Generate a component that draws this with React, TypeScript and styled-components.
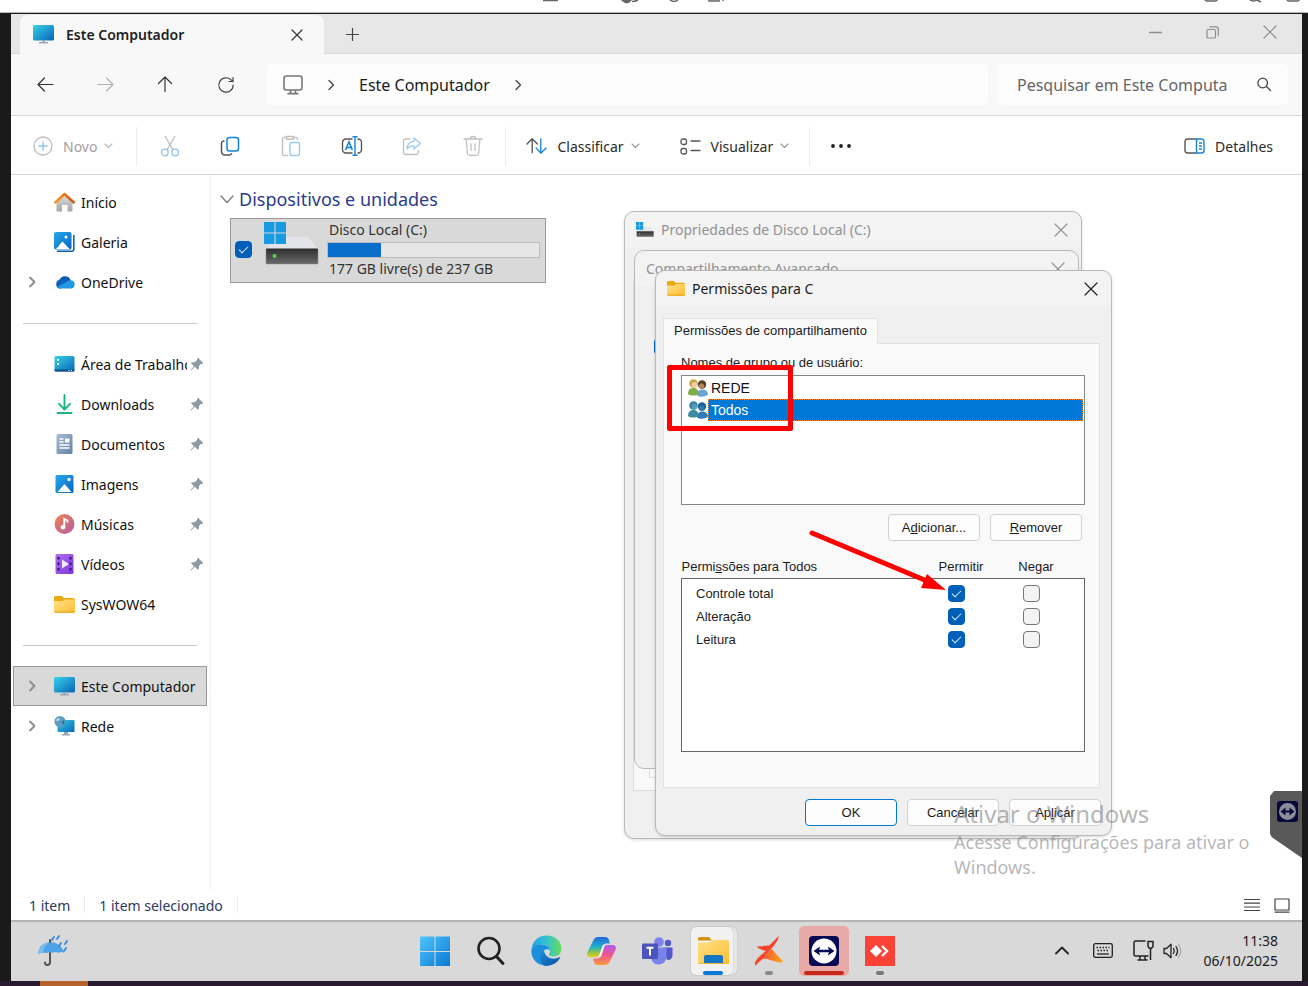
import React from 'react';
import styled, { createGlobalStyle, css } from 'styled-components';

const ui = "'Noto Sans', 'Open Sans', sans-serif";
const classic = "'Liberation Sans', Arial, sans-serif";

const GlobalStyle = createGlobalStyle`
  *, *::before, *::after { box-sizing: border-box; }
  body { margin: 0; background: #1a1a1a; font-family: ${ui}; color: #1b1b1b; }
  button, input { font: inherit; color: inherit; }
`;

/* ---------- page frame ---------- */

const Page = styled.div`
  min-height: 100vh;
  display: flex;
  flex-direction: column;
  background: #1a1a1a;
`;

const HostBar = styled.div`
  height: 13px;
  flex: none;
  display: flex;
  justify-content: space-between;
  padding: 0 8px 0 542px;
  background: #fff;
  border-bottom: 1px solid #b9b9b9;
`;

const HostBottom = styled.div`
  height: 5px;
  flex: none;
  padding-left: 40px;
  background: #2a1a30;
`;

const HostBottomTab = styled.div`
  width: 48px;
  height: 5px;
  background: #b5622e;
`;

const Desktop = styled.div`
  position: relative;
  flex: 1;
  display: flex;
  flex-direction: column;
  margin: 1px 6px 0 11px;
  background: #fff;
`;

const Explorer = styled.main`
  flex: 1;
  display: flex;
  flex-direction: column;
  min-height: 0;
`;

/* ---------- title bar ---------- */

const TitleBar = styled.div`
  height: 40px;
  display: flex;
  align-items: flex-end;
  padding-left: 9px;
  background: #e7e7e7;
  border-bottom: 1px solid #d9d9d9;
`;

const WindowTab = styled.div`
  height: 39px;
  width: 304px;
  display: flex;
  align-items: center;
  gap: 12px;
  padding: 0 17px 0 13px;
  margin-bottom: -1px;
  background: #f8f8f8;
  border-radius: 8px 8px 0 0;
  font-size: 14px;
  font-weight: 600;
  color: #222;
`;

const PlainButton = styled.button<{ $w?: number; $h?: number }>`
  width: ${(p) => p.$w ?? 40}px;
  height: ${(p) => p.$h ?? 40}px;
  flex: none;
  display: flex;
  align-items: center;
  justify-content: center;
  padding: 0;
  border: 0;
  background: none;
`;

const Grow = styled.span`
  flex: 1;
`;

const Caption = styled.div`
  display: flex;
  align-self: flex-start;
  margin-left: auto;
  padding-right: 3px;
  color: #8d8d8d;
`;

/* ---------- navigation ---------- */

const NavBar = styled.div`
  height: 62px;
  display: flex;
  align-items: center;
  padding: 0 14px;
  gap: 10px;
  background: #f8f8f8;
  border-bottom: 1px solid #d6d6d6;
`;

const NavButtons = styled.nav`
  display: flex;
  gap: 20px;
  margin-right: 10px;
`;

const AddressBar = styled.div`
  flex: 1;
  height: 41px;
  display: flex;
  align-items: center;
  padding-left: 16px;
  gap: 24px;
  background: #fdfdfd;
  border-radius: 5px;
  font-size: 16px;
`;

const SearchBox = styled.label`
  width: 290px;
  height: 41px;
  display: flex;
  align-items: center;
  padding: 0 16px 0 19px;
  background: #fdfdfd;
  border-radius: 5px;
`;

const SearchInput = styled.input`
  flex: 1;
  min-width: 0;
  padding: 0;
  border: 0;
  outline: 0;
  background: none;
  font-size: 16px;
  &::placeholder { color: #666; opacity: 1; }
`;

/* ---------- command bar ---------- */

const CommandBar = styled.div`
  height: 59px;
  display: flex;
  align-items: center;
  padding: 2px 9px 0 2px;
  border-bottom: 1px solid #d6d6d6;
  background: #fff;
`;

const Divider = styled.span`
  width: 1px;
  height: 39px;
  background: #ececec;
`;

const Command = styled.button<{ $muted?: boolean }>`
  height: 40px;
  display: flex;
  align-items: center;
  gap: 10px;
  padding: 0 20px;
  border: 0;
  background: none;
  font-size: 14px;
  color: ${(p) => (p.$muted ? '#a0a0a0' : '#2a2a2a')};
  & > svg:last-child:not(:first-child) { margin-left: -3px; }
`;

const IconCommands = styled.div`
  width: 364px;
  display: flex;
  margin: 0 2px;
`;

const IconCommand = styled.button`
  flex: 1;
  height: 40px;
  display: flex;
  align-items: center;
  justify-content: center;
  padding: 0;
  border: 0;
  background: none;
`;

/* ---------- sidebar ---------- */

const Body = styled.div`
  flex: 1;
  display: flex;
`;

const Sidebar = styled.nav`
  width: 200px;
  flex: none;
  padding: 7px 3px 0 2px;
  border-right: 1px solid #f0f0f0;
`;

const SideItem = styled.a<{ $selected?: boolean }>`
  height: 40px;
  display: flex;
  align-items: center;
  padding: 0 2px 0 14px;
  border: 1px solid ${(p) => (p.$selected ? '#999' : 'transparent')};
  background: ${(p) => (p.$selected ? '#d9d9d9' : 'none')};
  color: #111;
  font-size: 14px;
  text-decoration: none;
`;

const SideChevron = styled.span`
  width: 26px;
  display: flex;
`;

const SideLabel = styled.span`
  flex: 1;
  margin: 0 3px 0 6px;
  overflow: hidden;
  white-space: nowrap;
`;

const SideRule = styled.hr`
  height: 1px;
  margin: 21px 10px 20px;
  border: 0;
  background: #c9c9c9;
`;

/* ---------- content ---------- */

const Content = styled.section`
  flex: 1;
  padding: 10px 9px;
`;

const GroupHeading = styled.h2`
  display: flex;
  align-items: center;
  gap: 5px;
  height: 28px;
  margin: 0;
  font-size: 18px;
  font-weight: 400;
  color: #2a3b8e;
`;

const Drive = styled.div`
  width: 316px;
  height: 65px;
  display: flex;
  align-items: center;
  margin: 5px 0 0 10px;
  padding: 0 5px 2px 4px;
  border: 1px solid #999;
  background: #d9d9d9;
`;

const DrivePicture = styled.div`
  display: flex;
  margin: 0 8px 12px 12px;
`;

const DriveInfo = styled.div`
  flex: 1;
  font-size: 14px;
  line-height: 20px;
  color: #333;
`;

const DriveName = styled.div`
  padding-left: 2px;
`;

const UsageBar = styled.div`
  height: 16px;
  margin: 2px 0 1px;
  border: 1px solid #bcbcbc;
  background: #e6e6e6;
`;

const UsageFill = styled.div`
  height: 100%;
  background: #0a6fcc;
`;

const StatusBar = styled.footer`
  height: 30px;
  display: flex;
  align-items: center;
  padding: 0 12px 0 18px;
  gap: 14px;
  font-size: 14px;
  color: #2c3a5e;
`;

const StatusRule = styled.span`
  width: 1px;
  height: 16px;
  background: #ebebeb;
`;

/* ---------- check box ---------- */

const Check = styled.input.attrs({ type: 'checkbox' })`
  appearance: none;
  position: relative;
  width: 17px;
  height: 17px;
  flex: none;
  margin: 0;
  display: block;
  border: 1px solid #777;
  border-radius: 4px;
  background: #f3f3f3;
  &:checked { border-color: #005fb8; background: #005fb8; }
  &:checked::after {
    content: '';
    position: absolute;
    left: 3px;
    top: 4px;
    width: 9px;
    height: 5px;
    border: solid #dbe9f6;
    border-width: 0 0 1px 1px;
    transform: rotate(-45deg);
  }
`;

/* ---------- dialogs ---------- */

const Dialog = styled.section<{ $x: number; $y: number; $w: number; $h: number; $front?: boolean }>`
  position: absolute;
  left: ${(p) => p.$x}px;
  top: ${(p) => p.$y}px;
  width: ${(p) => p.$w}px;
  height: ${(p) => p.$h}px;
  display: flex;
  flex-direction: column;
  border: 1px solid #b9b9b9;
  border-radius: 10px;
  background: #f0f0f0;
  font-family: ${classic};
  font-size: 13px;
  ${(p) => p.$front && css`box-shadow: 0 1px 3px rgba(0, 0, 0, 0.15);`}
`;

const DialogTitle = styled.header<{ $muted?: boolean }>`
  height: 35px;
  flex: none;
  display: flex;
  align-items: center;
  gap: 7px;
  padding-left: 11px;
  border-radius: 10px 10px 0 0;
  background: #f3f3f3;
  font-family: ${ui};
  font-size: 14px;
  color: ${(p) => (p.$muted ? '#929292' : '#1b1b1b')};
`;

const BackPanel = styled.div`
  flex: 1;
  display: flex;
  margin: 32px 8px 47px;
  padding: 15px 15px 12px;
  border: 1px solid #dcdcdc;
  background: #f9f9f9;
`;

const GroupBox = styled.div`
  flex: 1;
  border: 1px solid #dcdcdc;
`;

const BackContent = styled.div`
  padding: 52px 19px;
`;

const TabList = styled.div`
  display: flex;
  margin: 12px 8px 0 7px;
`;

const DialogTab = styled.button`
  height: 26px;
  width: 215px;
  margin-bottom: -1px;
  padding: 0 0 2px;
  border: 1px solid #e2e2e2;
  border-bottom: 0;
  background: #f9f9f9;
  z-index: 1;
`;

const TabPanel = styled.div`
  flex: 1;
  display: flex;
  flex-direction: column;
  margin: 0 11px 0 7px;
  padding: 9px 14px 0 17px;
  border: 1px solid #e2e2e2;
  background: #f9f9f9;
`;

const FieldLabel = styled.div`
  height: 22px;
  line-height: 20px;
`;

const UserList = styled.ul`
  position: relative;
  height: 130px;
  margin: 0;
  padding: 1px;
  border: 1px solid #828790;
  background: #fff;
  list-style: none;
`;

const UserRow = styled.li`
  height: 22px;
  display: flex;
  align-items: center;
  padding-left: 5px;
  font-size: 14px;
`;

const UserName = styled.span<{ $selected?: boolean }>`
  flex: 1;
  height: 22px;
  line-height: 20px;
  padding-left: 2px;
  border: 1px dotted ${(p) => (p.$selected ? '#ff8728' : 'transparent')};
  background: ${(p) => (p.$selected ? '#0078d7' : 'none')};
  color: ${(p) => (p.$selected ? '#fff' : '#111')};
`;

const ButtonRow = styled.div<{ $pad: number }>`
  display: flex;
  justify-content: flex-end;
  gap: 10px;
  padding-right: ${(p) => p.$pad}px;
`;

const DialogButton = styled.button<{ $primary?: boolean }>`
  width: 92px;
  height: 27px;
  padding: 0;
  border: 1px solid ${(p) => (p.$primary ? '#0078d4' : '#d0d0d0')};
  border-radius: 4px;
  background: #fdfdfd;
`;

const ListActions = styled.div`
  padding: 9px 0 14px;
`;

const PermissionTable = styled.table`
  width: 404px;
  border-collapse: collapse;
  table-layout: fixed;
  th { font-weight: 400; height: 23px; padding: 0; }
  thead th:first-child { text-align: left; width: 237px; }
  thead th:nth-child(2), thead th:nth-child(3) { width: 75px; padding-left: 10px; }
  tbody { border: 1px solid #646464; background: #fff; }
  tbody th { text-align: left; padding-left: 14px; }
  tbody th, tbody td { height: 23px; }
  td { padding: 0; }
  td > input { margin: 0 auto; }
`;

const Spacer = styled.tr<{ $h: number }>`
  & > td { height: ${(p) => p.$h}px !important; }
`;

const DialogFooter = styled.div`
  padding: 11px 0 9px;
`;

/* ---------- overlays ---------- */

const Highlight = styled.div`
  position: absolute;
  left: -15px;
  top: -11px;
  width: 126px;
  height: 66px;
  border: 5px solid #fe0000;
  border-radius: 2px;
`;

const Arrow = styled.svg`
  position: absolute;
  left: 153px;
  top: 258px;
`;

const Watermark = styled.aside`
  position: absolute;
  right: 40px;
  bottom: 101px;
  width: 308px;
  color: rgba(120, 120, 120, 0.55);
  font-size: 18px;
  line-height: 25px;
  pointer-events: none;
`;

const WatermarkTitle = styled.div`
  font-size: 24px;
  line-height: 32px;
`;

const SideHandle = styled.button`
  position: absolute;
  right: 0;
  bottom: 123px;
  padding: 0;
  border: 0;
  background: none;
  display: block;
  & > svg { display: block; }
`;

/* ---------- task bar ---------- */

const TaskBar = styled.div`
  height: 61px;
  flex: none;
  display: grid;
  grid-template-columns: 1fr 495px 1fr;
  align-items: center;
  padding: 0 0 2px 2px;
  border-top: 2px solid #b4b4b4;
  background: #d9d9d9;
`;

const Weather = styled.div`
  display: flex;
  padding-left: 24px;
`;

const Apps = styled.div`
  display: flex;
  justify-content: space-between;
`;

const AppButton = styled.button<{ $tone?: string }>`
  position: relative;
  width: 50px;
  height: 50px;
  display: flex;
  align-items: center;
  justify-content: center;
  padding: 0;
  border: 0;
  border-radius: 5px;
  background: ${(p) => p.$tone ?? 'none'};
`;

const Stack = styled.span`
  position: absolute;
  inset: 1px 1px 1px 3px;
  border-radius: 5px;
  background: #e6e6e6;
  box-shadow: 0 0 1px #999;
  &::after {
    content: '';
    position: absolute;
    inset: 0 4px 0 0;
    border-radius: 5px;
    background: #f1f1f1;
    box-shadow: 0 0 1px #999;
  }
`;

const Above = styled.span`
  position: relative;
  display: flex;
`;

const Indicator = styled.span<{ $w: number; $c: string }>`
  position: absolute;
  left: calc(50% - ${(p) => p.$w / 2}px);
  bottom: 1px;
  width: ${(p) => p.$w}px;
  height: 4px;
  border-radius: 2px;
  background: ${(p) => p.$c};
`;

const Tray = styled.div`
  display: flex;
  align-items: center;
  justify-content: flex-end;
  padding-right: 24px;
`;

const TrayIcons = styled.div`
  display: flex;
  align-items: center;
  margin-right: 22px;
`;

const Gap = styled.span<{ $w: number }>`
  width: ${(p) => p.$w}px;
`;

const Clock = styled.time`
  font-size: 14px;
  line-height: 20px;
  text-align: right;
`;

/* ---------- icons ---------- */

type LineProps = { d: string; w?: number; h?: number; sw?: number; c?: string };
const Line = ({ d, w = 20, h = 20, sw = 1.3, c = 'currentColor' }: LineProps) => (
  <svg width={w} height={h} viewBox={`0 0 ${w} ${h}`} fill="none" stroke={c} strokeWidth={sw} strokeLinecap="round" strokeLinejoin="round" aria-hidden="true">
    <path d={d} />
  </svg>
);

const Close = ({ size = 14, c = 'currentColor' }: { size?: number; c?: string }) => (
  <Line w={size} h={size} d={`M1 1L${size - 1} ${size - 1}M${size - 1} 1L1 ${size - 1}`} c={c} sw={1.2} />
);
const ChevronDown = ({ c = '#999' }: { c?: string }) => <Line w={9} h={6} d="M1 1l3.5 3.5L8 1" c={c} sw={1.1} />;
const ChevronRight = ({ c = '#444', sw = 1.3 }: { c?: string; sw?: number }) => <Line w={8} h={12} d="M2 1.500l4.500 4.500L2 10.500" c={c} sw={sw} />;

const Gradients = () => (
  <svg width="0" height="0" style={{ position: 'absolute' }} aria-hidden="true">
    <defs>
      <linearGradient id="screen" x1="0" y1="0" x2="1" y2="1"><stop offset="0" stopColor="#35d3e6" /><stop offset="1" stopColor="#0a63b8" /></linearGradient>
      <linearGradient id="sky" x1="0" y1="0" x2="1" y2="1"><stop offset="0" stopColor="#2aa9ec" /><stop offset="1" stopColor="#0664bf" /></linearGradient>
      <linearGradient id="tiles" x1="0" y1="0" x2="1" y2="1"><stop offset="0" stopColor="#4fc6fa" /><stop offset="1" stopColor="#0a78d4" /></linearGradient>
      <linearGradient id="roof" x1="0" y1="0" x2="1" y2="0"><stop offset="0" stopColor="#f59a1c" /><stop offset="1" stopColor="#dc4a12" /></linearGradient>
      <linearGradient id="wall" x1="0" y1="0" x2="0" y2="1"><stop offset="0" stopColor="#dcdcdc" /><stop offset="1" stopColor="#a6a6a6" /></linearGradient>
      <linearGradient id="doc" x1="0" y1="0" x2="1" y2="1"><stop offset="0" stopColor="#a9bcd3" /><stop offset="1" stopColor="#6480a5" /></linearGradient>
      <linearGradient id="music" x1="0" y1="0" x2="1" y2="1"><stop offset="0" stopColor="#f2854c" /><stop offset="1" stopColor="#b25ca8" /></linearGradient>
      <linearGradient id="video" x1="0" y1="0" x2="1" y2="1"><stop offset="0" stopColor="#b56cf0" /><stop offset="1" stopColor="#7a38d8" /></linearGradient>
      <linearGradient id="folder" x1="0" y1="0" x2="1" y2="1"><stop offset="0" stopColor="#ffe08a" /><stop offset="1" stopColor="#fdbf2e" /></linearGradient>
      <linearGradient id="metal" x1="0" y1="0" x2="0" y2="1"><stop offset="0" stopColor="#2e2e2e" /><stop offset="1" stopColor="#6a6a6a" /></linearGradient>
      <linearGradient id="edgeTop" x1="0" y1="0" x2="1" y2="0"><stop offset="0" stopColor="#1fa3e0" /><stop offset="0.500" stopColor="#35c1d0" /><stop offset="1" stopColor="#66dd55" /></linearGradient>
      <linearGradient id="edgeLow" x1="0" y1="0" x2="1" y2="1"><stop offset="0" stopColor="#1b8fdd" /><stop offset="1" stopColor="#0b4f9e" /></linearGradient>
      <linearGradient id="copA" x1="0" y1="0" x2="0" y2="1"><stop offset="0" stopColor="#2265e0" /><stop offset="0.500" stopColor="#20b4c8" /><stop offset="0.800" stopColor="#9cc83c" /><stop offset="1" stopColor="#f0c818" /></linearGradient>
      <linearGradient id="copB" x1="0" y1="0" x2="0" y2="1"><stop offset="0" stopColor="#b25cf0" /><stop offset="0.500" stopColor="#f0568e" /><stop offset="1" stopColor="#fb9a3c" /></linearGradient>
      <linearGradient id="spark" x1="0" y1="0" x2="1" y2="0"><stop offset="0" stopColor="#f5342c" /><stop offset="1" stopColor="#fba81e" /></linearGradient>
    </defs>
  </svg>
);

const Pc = () => (
  <svg width="21" height="19" viewBox="0 0 21 19" aria-hidden="true">
    <rect x="0" y="0" width="21" height="15.500" rx="1.500" fill="url(#screen)" />
    <path d="M9 15.500h3V17h3v1.500H6V17h3z" fill="#9aa6b2" />
  </svg>
);
const Home = () => (
  <svg width="21" height="20" viewBox="0 0 21 20" aria-hidden="true">
    <path d="M2.500 9L10.500 2.500 18.500 9v9.500a1 1 0 0 1-1 1h-4V13h-5.500v6.500h-4.500a1 1 0 0 1-1-1z" fill="url(#wall)" />
    <path d="M1.200 10.500L10.500 2l9.300 8.500" fill="none" stroke="url(#roof)" strokeWidth="2.400" strokeLinecap="round" strokeLinejoin="round" />
  </svg>
);
const Gallery = () => (
  <svg width="21" height="20" viewBox="0 0 21 20" aria-hidden="true">
    <path d="M3 19.200h14.800a2 2 0 0 0 2-2V3" fill="none" stroke="#0a5ba8" strokeWidth="1.500" />
    <rect x="0" y="0" width="17.500" height="17.500" rx="2" fill="url(#sky)" />
    <path d="M2 17l6.500-7.500L15.500 17z" fill="#fff" />
    <circle cx="12" cy="5" r="1.500" fill="#fff" />
  </svg>
);
const Cloud = () => (
  <svg width="21" height="14" viewBox="0 0 20 14" aria-hidden="true">
    <path d="M5 5a6 6 0 0 1 10.800-.6L17 7l-7 3z" fill="#0a5bb5" />
    <path d="M5.500 4.500A4.700 4.700 0 0 0 4.700 13.500h2L13 7 8.500 4.800a5 5 0 0 0-3-.3z" fill="#0f62bd" />
    <path d="M4.700 13.500h11a4 4 0 0 0 .6-8.200c-1.600-.2-2.700.3-3.700 1L2 12.500z" fill="#2497e4" />
  </svg>
);
const DesktopIcon = () => (
  <svg width="21" height="16" viewBox="0 0 20 16" aria-hidden="true">
    <rect width="20" height="15.500" rx="1.500" fill="url(#screen)" />
    <path d="M2.500 3h2v2h-2zM2.500 7h2v2h-2z" fill="#fff" />
    <path d="M0 13.500h20v.5a1.500 1.500 0 0 1-1.500 1.500h-17A1.500 1.500 0 0 1 0 14z" fill="#0b4f86" />
    <path d="M14 14h1v1h-1zM16.500 14h1v1h-1z" fill="#fff" />
  </svg>
);
const Download = () => (
  <svg width="21" height="20" viewBox="0 0 21 20" fill="none" stroke="#1cb482" strokeWidth="1.900" strokeLinecap="round" strokeLinejoin="round" aria-hidden="true">
    <path d="M10.500 1v14M5 9.800l5.500 5.700L16 9.800M3.500 19h14" />
  </svg>
);
const Doc = () => (
  <svg width="21" height="20" viewBox="0 0 20 20" aria-hidden="true">
    <rect x="2" width="16" height="20" rx="1.500" fill="url(#doc)" />
    <path d="M5 5h4M5 8h4M5 11h10M5 14h10" stroke="#fff" strokeWidth="1.300" />
    <rect x="10.500" y="4.500" width="4.500" height="4" fill="#fff" />
  </svg>
);
const Picture = () => (
  <svg width="21" height="20" viewBox="0 0 20 20" aria-hidden="true">
    <rect x="1" y="1" width="18" height="18" rx="1.500" fill="url(#sky)" />
    <path d="M3 18l7-8 7 8z" fill="#fff" />
    <circle cx="14.500" cy="5.500" r="1.700" fill="#fff" />
  </svg>
);
const Music = () => (
  <svg width="21" height="20" viewBox="0 0 20 20" aria-hidden="true">
    <circle cx="10" cy="10" r="10" fill="url(#music)" />
    <circle cx="8.500" cy="13.300" r="2.300" fill="#fff" />
    <path d="M9.800 13V5l3.200 1.500v2" fill="none" stroke="#fff" strokeWidth="1.900" />
  </svg>
);
const Video = () => (
  <svg width="21" height="20" viewBox="0 0 20 20" aria-hidden="true">
    <rect x="1" width="18" height="20" rx="1.500" fill="url(#video)" />
    <path d="M4 3v15M16 3v15" stroke="#3a1a70" strokeWidth="2.200" strokeDasharray="2.500 3" />
    <path d="M7.500 5.500v9l7-4.500z" fill="#f3eaff" />
  </svg>
);
const Folder = ({ w = 21, h = 17 }: { w?: number; h?: number }) => (
  <svg width={w} height={h} viewBox="0 0 20 17" preserveAspectRatio="none" aria-hidden="true">
    <path d="M0 1.500A1.500 1.500 0 0 1 1.500 0h6l2 2H18a2 2 0 0 1 2 2v5H0z" fill="#eda80f" />
    <path d="M0 5h8.500l1.500-1.500h10v12a1.500 1.500 0 0 1-1.500 1.500h-17A1.500 1.500 0 0 1 0 15.500z" fill="url(#folder)" />
    <path d="M.5 16h19" stroke="#e3a01c" />
  </svg>
);
const Network = () => (
  <svg width="21" height="20" viewBox="0 0 20 20" aria-hidden="true">
    <rect x="3" y="4" width="17" height="12" rx="1" fill="url(#screen)" />
    <path d="M9.500 16h4v2h2v1.500h-8V18h2z" fill="#9aa6b2" />
    <circle cx="5.500" cy="5.500" r="5.500" fill="#5f9cc2" />
    <path d="M1.500 4q2-2.500 4-1.500-1 2.500-3 2.500z" fill="#cfe6f4" /><path d="M7 6l2.500-2 .8 2.500-2 2.500z" fill="#2b6f9c" />
  </svg>
);
const Pin = () => (
  <svg width="14" height="14" viewBox="0 0 14 14" aria-hidden="true">
    <path d="M8 .8L13.200 6l-1 .9-1-.2-2.300 2.400v2.700l-1 1-3-3L1 13.400l-.5-.5L4 9.200l-3-3 1-1h2.700l2.500-2.400-.2-1z" fill="#8d99a3" />
  </svg>
);
const DriveIcon = ({ w = 55, h = 43 }: { w?: number; h?: number }) => (
  <svg width={w} height={h} viewBox="0 0 55 43" preserveAspectRatio="none" aria-hidden="true">
    <path d="M10 15h34l10 12H3z" fill="#e4e5ea" />
    <rect x="2" y="26.500" width="52" height="15.500" rx="1" fill="url(#metal)" stroke="#888" strokeWidth="0.500" />
    <circle cx="10.500" cy="34" r="2" fill="#3ee04a" />
    <path d="M0 0h10.500v10.500H0zM11.500 0H22v10.500H11.500zM0 11.500h10.500V22H0zM11.500 11.500H22V22H11.500z" fill="#189ae0" />
  </svg>
);
const People = ({ selected }: { selected?: boolean }) => (
  <svg width="20" height="18" viewBox="0 0 20 18" aria-hidden="true">
    <path d="M9 16.500c0-4 2-6 5.500-6s5.500 2.500 5.500 5c-3 2.500-8 3-11 1z" fill={selected ? '#2f7cb8' : '#6ea5d8'} />
    <circle cx="14" cy="5.500" r="4.200" fill={selected ? '#1d6299' : '#5b3d28'} />
    <circle cx="13.500" cy="7.300" r="2.700" fill={selected ? '#2f7cae' : '#b5835c'} />
    <path d="M0 15c0-4 2-6 5.500-6s5 2.500 5 6c-3 2-8 2-10.500 0z" fill={selected ? '#3c8ba0' : '#7fae48'} />
    <circle cx="5.500" cy="4.500" r="4.300" fill={selected ? '#3a84a0' : '#c8a548'} />
    <circle cx="6.500" cy="5.800" r="2.700" fill={selected ? '#5a9cb8' : '#edcfa5'} />
  </svg>
);
const MonitorLine = () => (
  <svg width="20" height="20" viewBox="0 0 20 20" fill="none" stroke="#777" strokeWidth="1.600" aria-hidden="true">
    <rect x="1" y="1" width="18" height="14" rx="2.500" />
    <path d="M7.500 15v3.500M12.500 15v3.500M4.500 18.600h11" />
  </svg>
);
const TeamViewer = ({ size = 30 }: { size?: number }) => (
  <svg width={size} height={size} viewBox="0 0 30 30" aria-hidden="true">
    <rect width="30" height="30" rx="4" fill="#050a52" />
    <circle cx="15" cy="15" r="12.500" fill="#fff" />
    <path d="M4.500 15L11 10.500l-.8 3.200h9.600l-.8-3.200 6.500 4.500-6.500 4.500.8-3.200h-9.600l.8 3.200z" fill="#050a52" />
  </svg>
);

/* ---------- data ---------- */

const quick = [
  { label: 'Área de Trabalho', icon: <DesktopIcon />, pin: true },
  { label: 'Downloads', icon: <Download />, pin: true },
  { label: 'Documentos', icon: <Doc />, pin: true },
  { label: 'Imagens', icon: <Picture />, pin: true },
  { label: 'Músicas', icon: <Music />, pin: true },
  { label: 'Vídeos', icon: <Video />, pin: true },
  { label: 'SysWOW64', icon: <Folder /> },
];

type SideProps = { label: string; icon: React.ReactNode; pin?: boolean; expand?: boolean; selected?: boolean };
const Side = ({ label, icon, pin, expand, selected }: SideProps) => (
  <SideItem href="#" $selected={selected} aria-current={selected ? 'page' : undefined}>
    <SideChevron>{expand && <ChevronRight c="#8a8a8a" sw={1.8} />}</SideChevron>
    {icon}
    <SideLabel>{label}</SideLabel>
    {pin && <Pin />}
  </SideItem>
);

const permissions = ['Controle total', 'Alteração', 'Leitura'];

export default function App() {
  return (
    <Page>
      <GlobalStyle />
      <Gradients />
      <HostBar>
        <svg width="184" height="4" viewBox="0 0 184 4" fill="none" stroke="#666" strokeWidth="1.500" aria-hidden="true">
          <path d="M1 .5h15M128 0q4 3 8 0M167 0v1h10V0M181 0v1" />
          <path d="M80 0q5 5 9 0zM90 1.500q5 0 6-2" fill="#666" />
        </svg>
        <svg width="96" height="4" viewBox="0 0 96 4" fill="none" stroke="#666" strokeWidth="1.500" aria-hidden="true">
          <path d="M1 0q1 1.300 3 1h6q3 0 3-1M46 0q4 2 7 0l4 2M83 0q1 1.300 3 1h6q3 0 3-1" />
        </svg>
      </HostBar>

      <Desktop>
        <Explorer>
          <TitleBar>
            <WindowTab>
              <Pc />
              <span>Este Computador</span>
              <Grow />
              <PlainButton $w={20} $h={20} aria-label="Fechar guia"><Close size={12} c="#333" /></PlainButton>
            </WindowTab>
            <PlainButton $w={56} $h={38} aria-label="Nova guia"><Line w={13} h={13} d="M6.500 .5v12M.5 6.500h12" c="#444" sw={1.2} /></PlainButton>
            <Caption>
              <PlainButton $w={57} $h={36} aria-label="Minimizar"><Line w={13} h={13} d="M.5 6.500h12" /></PlainButton>
              <PlainButton $w={57} $h={36} aria-label="Restaurar"><Line w={13} h={13} d="M2.500 3.500h6q1 0 1 1v6.500q0 1-1 1h-6.500q-1 0-1-1v-6.500q0-1 1-1zM4 .8h5.500q2.800 0 2.800 2.800v6" sw={1.2} /></PlainButton>
              <PlainButton $w={58} $h={36} aria-label="Fechar"><Close /></PlainButton>
            </Caption>
          </TitleBar>

          <NavBar>
            <NavButtons aria-label="Navegação">
              <PlainButton aria-label="Voltar"><Line w={17} h={16} d="M16 7.500H1M7.500 1L1 7.500 7.500 14" c="#333" sw={1.2} /></PlainButton>
              <PlainButton aria-label="Avançar"><Line w={17} h={16} d="M1 7.500h15M9.500 1L16 7.500 9.500 14" c="#b0b0b0" sw={1.2} /></PlainButton>
              <PlainButton aria-label="Acima"><Line w={16} h={17} d="M8 15.500V1M1.500 7.500L8 1l6.500 6.500" c="#333" sw={1.2} /></PlainButton>
              <PlainButton $w={42} aria-label="Atualizar"><Line w={18} h={18} d="M16.200 9a7.200 7.200 0 1 1-2.100-5.100L16 5.500M16 1.500v4h-4" c="#444" sw={1.2} /></PlainButton>
            </NavButtons>
            <AddressBar>
              <MonitorLine />
              <ChevronRight />
              <span>Este Computador</span>
              <ChevronRight />
            </AddressBar>
            <SearchBox>
              <SearchInput type="text" placeholder="Pesquisar em Este Computa" aria-label="Pesquisar em Este Computador" />
              <Line w={15} h={15} d="M10.500 6a4.800 4.800 0 1 1-9.600 0 4.800 4.800 0 0 1 9.600 0zM9.300 9.300l4.200 4.200" c="#444" />
            </SearchBox>
          </NavBar>

          <CommandBar>
            <Command $muted>
              <svg width="20" height="20" viewBox="0 0 20 20" fill="none" aria-hidden="true">
                <circle cx="10" cy="10" r="9" stroke="#bcbcbc" strokeWidth="1.300" />
                <path d="M10 5.500v9M5.500 10h9" stroke="#8cc2ee" strokeWidth="1.300" />
              </svg>
              <span>Novo</span>
              <ChevronDown c="#b5b5b5" />
            </Command>
            <Gap $w={3} />
            <Divider />
            <IconCommands>
              <IconCommand aria-label="Recortar">
                <svg width="20" height="22" viewBox="0 0 20 22" fill="none" strokeWidth="1.300" aria-hidden="true">
                  <path d="M5 1l8 14M15 1L7 15" stroke="#bdbdbd" />
                  <circle cx="4.800" cy="17.500" r="3.300" stroke="#8cc2ee" /><circle cx="15.200" cy="17.500" r="3.300" stroke="#8cc2ee" />
                </svg>
              </IconCommand>
              <IconCommand aria-label="Copiar">
                <svg width="20" height="20" viewBox="0 0 20 20" fill="none" strokeWidth="1.500" aria-hidden="true">
                  <path d="M4.500 5H4a2.500 2.500 0 0 0-2.500 2.500v8A3.500 3.500 0 0 0 5 19h4.500a2.500 2.500 0 0 0 2.300-1.700" stroke="#555" />
                  <rect x="7" y="1.500" width="11.500" height="13.500" rx="2.500" stroke="#1583dc" />
                </svg>
              </IconCommand>
              <IconCommand aria-label="Colar">
                <svg width="20" height="22" viewBox="0 0 20 22" fill="none" strokeWidth="1.400" aria-hidden="true">
                  <path d="M5.500 2.500H3A1.500 1.500 0 0 0 1.500 4v15A1.500 1.500 0 0 0 3 20.500h4M12.500 2.500H15A1.500 1.500 0 0 1 16.500 4v1M5.500 1.500h7v2.800h-7z" stroke="#c0c0c0" />
                  <rect x="9" y="7.500" width="9.500" height="13" rx="1.500" stroke="#9ccbf0" />
                </svg>
              </IconCommand>
              <IconCommand aria-label="Renomear">
                <svg width="22" height="20" viewBox="0 0 22 20" fill="none" strokeWidth="1.400" aria-hidden="true">
                  <path d="M11.500 3H5a3.500 3.500 0 0 0-3.500 3.500v7A3.500 3.500 0 0 0 5 17h6.500M16.500 3H17a3.500 3.500 0 0 1 3.500 3.500v7A3.500 3.500 0 0 1 17 17h-.5" stroke="#555" />
                  <path d="M11.500 .8h5M11.500 19.200h5M14 1v18" stroke="#1583dc" />
                  <path d="M4.500 14L8 5.800 11.300 14M5.700 11.500h4.500" stroke="#1583dc" strokeWidth="1.600" />
                </svg>
              </IconCommand>
              <IconCommand aria-label="Compartilhar">
                <svg width="20" height="20" viewBox="0 0 20 20" fill="none" strokeWidth="1.300" aria-hidden="true">
                  <path d="M8 3H4a2.500 2.500 0 0 0-2.500 2.500V16A2.500 2.500 0 0 0 4 18.500h10a2.500 2.500 0 0 0 2.500-2.500v-2" stroke="#c0c0c0" />
                  <path d="M12 2l6.500 5.500L12 13v-3.200c-3.500 0-5.500 1-7 3.200 .3-4.500 3-7.300 7-7.600z" stroke="#9ccbf0" strokeLinejoin="round" />
                </svg>
              </IconCommand>
              <IconCommand aria-label="Excluir">
                <svg width="20" height="22" viewBox="0 0 20 22" fill="none" stroke="#c0c0c0" strokeWidth="1.300" strokeLinecap="round" aria-hidden="true">
                  <path d="M1 4h18M3 4l1.500 14.500a2 2 0 0 0 2 1.800h7a2 2 0 0 0 2-1.800L17 4M7 4q.5-2.500 3-2.500T13 4M8 9v6.500M12 9v6.500" />
                </svg>
              </IconCommand>
            </IconCommands>
            <Divider />
            <Command>
              <svg width="21" height="18" viewBox="0 0 22 18" fill="none" strokeWidth="1.400" strokeLinecap="round" strokeLinejoin="round" aria-hidden="true">
                <path d="M6.500 16V1.500M1 7l5.500-5.500L12 7" stroke="#555" />
                <path d="M15.500 1.500v15M10.500 11l5 5.500 5.500-5.500" stroke="#1583dc" />
              </svg>
              <span>Classificar</span>
              <ChevronDown />
            </Command>
            <Command>
              <svg width="21" height="17" viewBox="0 0 21 17" fill="none" stroke="#555" strokeWidth="1.300" strokeLinecap="round" aria-hidden="true">
                <rect x="1" y="1" width="5.500" height="5.500" rx="2" /><rect x="1" y="10.500" width="5.500" height="5.500" rx="2" />
                <path d="M11 3h9M11 12.500h9" />
              </svg>
              <span>Visualizar</span>
              <ChevronDown />
            </Command>
            <Divider />
            <Command aria-label="Mais opções">
              <svg width="22" height="6" viewBox="0 0 22 6" fill="#222" aria-hidden="true"><circle cx="3" cy="3" r="1.900" /><circle cx="11" cy="3" r="1.900" /><circle cx="19" cy="3" r="1.900" /></svg>
            </Command>
            <Grow />
            <Command>
              <svg width="21" height="16" viewBox="0 0 21 16" fill="none" strokeWidth="1.400" aria-hidden="true">
                <path d="M12.500 1H3.500A2.500 2.500 0 0 0 1 3.500v9A2.500 2.500 0 0 0 3.500 15h9" stroke="#555" />
                <path d="M12.500 1h5A2.500 2.500 0 0 1 20 3.500v9a2.500 2.500 0 0 1-2.500 2.500h-5zM15 5h3M15 8h3M15 11h3" stroke="#1583dc" />
              </svg>
              <span>Detalhes</span>
            </Command>
          </CommandBar>

          <Body>
            <Sidebar aria-label="Locais">
              <Side label="Início" icon={<Home />} />
              <Side label="Galeria" icon={<Gallery />} />
              <Side label="OneDrive" icon={<Cloud />} expand />
              <SideRule />
              {quick.map((q) => <Side key={q.label} {...q} />)}
              <SideRule />
              <Side label="Este Computador" icon={<Pc />} expand selected />
              <Side label="Rede" icon={<Network />} expand />
            </Sidebar>
            <Content>
              <GroupHeading>
                <Line w={14} h={9} d="M1 1l6 6.500L13 1" c="#777" sw={1.2} />
                Dispositivos e unidades
              </GroupHeading>
              <Drive>
                <Check defaultChecked aria-label="Selecionar Disco Local (C:)" />
                <DrivePicture><DriveIcon /></DrivePicture>
                <DriveInfo>
                  <DriveName>Disco Local (C:)</DriveName>
                  <UsageBar><UsageFill style={{ width: `${(1 - 177 / 237) * 100}%` }} /></UsageBar>
                  <DriveName>177 GB livre(s) de 237 GB</DriveName>
                </DriveInfo>
              </Drive>
            </Content>
          </Body>

          <StatusBar>
            <span>1 item</span>
            <StatusRule />
            <span>1 item selecionado</span>
            <StatusRule />
            <Grow />
            <Line w={16} h={14} d="M.5 1.500h15M.5 5.200h15M.5 9h15M.5 12.500h15" c="#444" sw={1.2} />
            <Line w={16} h={15} d="M1 1h14v11H1zM1 14.200h14" c="#444" sw={1.2} />
          </StatusBar>
        </Explorer>

        <Dialog $x={613} $y={197} $w={458} $h={628} $front role="dialog" aria-label="Propriedades de Disco Local (C:)">
          <DialogTitle $muted>
            <DriveIcon w={18} h={15} />
            <span>Propriedades de Disco Local (C:)</span>
            <Grow />
            <PlainButton $h={35} aria-label="Fechar"><Close /></PlainButton>
          </DialogTitle>
          <BackPanel><GroupBox /></BackPanel>
        </Dialog>

        <Dialog $x={623} $y={236} $w={445} $h={519} role="dialog" aria-label="Compartilhamento Avançado">
          <DialogTitle $muted>
            <span>Compartilhamento Avançado</span>
            <Grow />
            <PlainButton $h={35} aria-label="Fechar"><Close /></PlainButton>
          </DialogTitle>
          <BackContent><Check defaultChecked aria-label="Compartilhar a pasta" /></BackContent>
        </Dialog>

        <Dialog $x={644} $y={256} $w={457} $h={566} $front role="dialog" aria-label="Permissões para C">
          <DialogTitle>
            <Folder w={18} h={15} />
            <span>Permissões para C</span>
            <Grow />
            <PlainButton $h={35} aria-label="Fechar"><Close c="#222" /></PlainButton>
          </DialogTitle>
          <TabList role="tablist">
            <DialogTab role="tab" aria-selected="true">Permissões de compartilhamento</DialogTab>
          </TabList>
          <TabPanel role="tabpanel">
            <FieldLabel><u>N</u>omes de grupo ou de usuário:</FieldLabel>
            <UserList aria-label="Nomes de grupo ou de usuário">
              <UserRow><People /><UserName>REDE</UserName></UserRow>
              <UserRow><People selected /><UserName $selected>Todos</UserName></UserRow>
              <Highlight as="li" aria-hidden="true" />
            </UserList>
            <ListActions>
              <ButtonRow $pad={3}>
                <DialogButton>A<u>d</u>icionar...</DialogButton>
                <DialogButton><u>R</u>emover</DialogButton>
              </ButtonRow>
            </ListActions>
            <PermissionTable>
              <thead>
                <tr><th scope="col">Permi<u>s</u>sões para Todos</th><th scope="col">Permitir</th><th scope="col">Negar</th><td /></tr>
              </thead>
              <tbody>
                <Spacer $h={4} aria-hidden="true"><td colSpan={4} /></Spacer>
                {permissions.map((p) => (
                  <tr key={p}>
                    <th scope="row">{p}</th>
                    <td><Check defaultChecked aria-label={`Permitir ${p}`} /></td>
                    <td><Check aria-label={`Negar ${p}`} /></td>
                    <td />
                  </tr>
                ))}
                <Spacer $h={100} aria-hidden="true"><td colSpan={4} /></Spacer>
              </tbody>
            </PermissionTable>
          </TabPanel>
          <DialogFooter>
            <ButtonRow $pad={10}>
              <DialogButton $primary>OK</DialogButton>
              <DialogButton>Cancelar</DialogButton>
              <DialogButton>Ap<u>l</u>icar</DialogButton>
            </ButtonRow>
          </DialogFooter>
          <Arrow width="140" height="66" viewBox="0 0 140 66" aria-hidden="true">
            <path d="M3 4L118 52" stroke="#fe0000" strokeWidth="5" strokeLinecap="round" />
            <path d="M137 61L118 45l-6 14z" fill="#fe0000" />
          </Arrow>
        </Dialog>

        <Watermark>
          <WatermarkTitle>Ativar o Windows</WatermarkTitle>
          Acesse Configurações para ativar o Windows.
        </Watermark>

        <SideHandle aria-label="Painel do TeamViewer">
          <svg width="32" height="67" viewBox="0 0 32 67" aria-hidden="true">
            <path d="M4 0h28v67L3 47a6 6 0 0 1-3-5V5z" fill="#595959" />
            <rect x="7" y="10" width="21" height="21" rx="3" fill="#05093a" />
            <circle cx="17.500" cy="20.500" r="8.500" fill="#8d8d9a" />
            <path d="M10.500 20.500l5-4v3h4v-3l5 4-5 4v-3h-4v3z" fill="#05093a" />
          </svg>
        </SideHandle>

        <TaskBar>
          <Weather>
            <svg width="32" height="34" viewBox="0 0 32 34" fill="none" aria-hidden="true">
              <path d="M1 20Q2 9 13 8q11 0 14 11-3-2-5.500 0-3-2-6 0-2.500-2-5 0Q6 18 1 20z" fill="#4da3e8" />
              <path d="M13 8Q6 12 6 19q-3-.5-5 1Q2 10 13 8z" fill="#7cc0f2" />
              <path d="M13 6v2M13 19v9q0 3-2.500 3T8 28.500" stroke="#555" strokeWidth="2" strokeLinecap="round" />
              <path d="M17 3l-2 3M22 2l-2 3M24 9l-2 3M30 7l-2 3M29 14l-2 3" stroke="#3b8fe0" strokeWidth="2" strokeLinecap="round" />
            </svg>
          </Weather>
          <Apps>
            <AppButton aria-label="Iniciar">
              <svg width="30" height="30" viewBox="0 0 30 30" aria-hidden="true"><path d="M0 .5h14.500V15H0zM15.500 .5H30V15H15.500zM0 16h14.500v14H0zM15.500 16H30v14H15.500z" fill="url(#tiles)" /></svg>
            </AppButton>
            <AppButton aria-label="Pesquisar">
              <svg width="30" height="30" viewBox="0 0 30 30" fill="none" stroke="#222" aria-hidden="true"><circle cx="13" cy="12.500" r="10.500" strokeWidth="2.600" /><path d="M20.500 20.500l6.500 7" strokeWidth="3" strokeLinecap="round" /></svg>
            </AppButton>
            <AppButton aria-label="Microsoft Edge">
              <svg width="31" height="31" viewBox="0 0 31 31" aria-hidden="true">
                <path d="M.5 15C1 6 7.500 .5 15.500 .5c9 0 15 6 15 13 0 5-3.500 8-8 8-3.500 0-5-1.300-4.500-3 .8-1 1.200-2 1-3.500C18.500 11 14 9 9.500 9.500 5 10 2 12 .5 15z" fill="url(#edgeTop)" />
                <path d="M.5 15C2 11.500 5.500 9.500 9.500 9.500c5.500 0 9.500 2.500 9.500 6-1.500-1.500-4-2-6 0-3 3-1.500 9 2.500 12.500l3 2.300C8 32.500-.5 24.500 .5 15z" fill="#1a8fdd" />
                <path d="M13 15.500c-4.500 1-6.500 8 0 15 6.500 .9 12.500-1.500 16-7.500 .3-.8-.2-1-.8-.7-6 3-13.700 1.200-15.200-6.800z" fill="url(#edgeLow)" />
              </svg>
            </AppButton>
            <AppButton aria-label="Copilot">
              <svg width="31" height="28" viewBox="0 0 32 30" aria-hidden="true">
                <path d="M7 4C8 1.500 10 0 12.500 0H20c2 0 3.300 1 3.800 2.800L25 7h-4c-2 0-3.300 1-4 3l-2.700 8.500c-.6 2-2 3-4 3H4.500c-3 0-4.600-2.200-3.700-5z" fill="url(#copA)" />
                <path d="M25 26c-1 2.500-3 4-5.500 4H12c-2 0-3.300-1-3.800-2.800L7 23h4c2 0 3.300-1 4-3l2.700-8.500c.6-2 2-3 4-3h5.800c3 0 4.600 2.200 3.700 5z" fill="url(#copB)" />
                <path d="M17.500 8.500h3l-1.300 1.300-3.500 11-3 .7h-1l1.500-1.500z" fill="#f2f2f2" />
              </svg>
            </AppButton>
            <AppButton aria-label="Microsoft Teams">
              <svg width="31" height="28" viewBox="0 0 31 28" aria-hidden="true">
                <circle cx="26" cy="6" r="3.200" fill="#5059c9" /><path d="M21 10.500h9.500v8c0 3-2.500 5-5.500 4.500z" fill="#5059c9" />
                <circle cx="17" cy="5" r="4.800" fill="#7b83eb" /><path d="M9 10.500h15.500V19c0 5-3.500 8.500-8 8.500S9 24 9 19z" fill="#7b83eb" />
                <rect y="6.500" width="16" height="15.500" rx="1.200" fill="#4b53bc" /><path d="M4.500 10.800h7M8 11v7.500" stroke="#fff" strokeWidth="2" />
              </svg>
            </AppButton>
            <AppButton aria-label="Explorador de Arquivos">
              <Stack />
              <Above>
                <svg width="31" height="28" viewBox="0 0 31 28" aria-hidden="true">
                  <path d="M0 2a2 2 0 0 1 2-2h9l3 3.500H0z" fill="#d6920b" />
                  <path d="M0 5.500h12L14.500 3H29a2 2 0 0 1 2 2v22H0z" fill="url(#folder)" />
                  <path d="M6 20a2 2 0 0 1 2-2h15a2 2 0 0 1 2 2v6H6z" fill="#1577c4" />
                  <path d="M0 26.500h31" stroke="#efb431" />
                </svg>
              </Above>
              <Indicator $w={20} $c="#0a78d6" />
            </AppButton>
            <AppButton aria-label="Atalho">
              <svg width="30" height="30" viewBox="0 0 30 30" aria-hidden="true">
                <path d="M24.500 0C25.500 4 18 13 1.500 29.500-1 27 4 21 12 15 7 13.500 3 12 3 10.500c5-.5 9-.5 12-1C18 7 21 4 24.500 0z" fill="#f8432b" />
                <path d="M14 16.500l4-3.500c4 6 8 8 11 12.500 0 3-10-1-18-3-4 1-7 4-9.500 7z" fill="url(#spark)" />
              </svg>
              <Indicator $w={8} $c="#8a8a8a" />
            </AppButton>
            <AppButton $tone="#e8aaa7" aria-label="TeamViewer">
              <TeamViewer />
              <Indicator $w={40} $c="#c42b1c" />
            </AppButton>
            <AppButton aria-label="AnyDesk">
              <svg width="30" height="30" viewBox="0 0 30 30" aria-hidden="true">
                <rect width="30" height="30" fill="#fb4236" />
                <path d="M11 9l6 6-6 6-6-6z" fill="#fff" /><path d="M17 10l5 5-5 5" stroke="#fff" strokeWidth="2.400" fill="none" />
              </svg>
              <Indicator $w={8} $c="#777" />
            </AppButton>
          </Apps>
          <Tray>
            <TrayIcons>
              <Line w={14} h={9} d="M1 7.500l6-6 6 6" c="#222" sw={1.8} />
              <Gap $w={24} />
              <svg width="20" height="15" viewBox="0 0 20 15" fill="none" stroke="#222" strokeWidth="1.300" aria-hidden="true">
                <rect x=".7" y=".7" width="18.600" height="13.600" rx="1.800" />
                <path d="M3.500 4.500h13M4.500 7.500h11" strokeDasharray="1.500 1.500" /><path d="M4 11h12" />
              </svg>
              <Gap $w={20} />
              <svg width="21" height="21" viewBox="0 0 21 21" fill="none" stroke="#222" strokeWidth="1.500" aria-hidden="true">
                <path d="M12.500 1H2.500A1.500 1.500 0 0 0 1 2.500v12A1.500 1.500 0 0 0 2.500 16h13M7 16v3.500M12 16v3.500M4.500 20h10M15 1.500h5v5l-1.500 1.800h-2L15 6.500zM17.500 8.500V20" />
              </svg>
              <Gap $w={9} />
              <svg width="19" height="16" viewBox="0 0 19 16" fill="none" stroke="#222" strokeWidth="1.300" strokeLinejoin="round" strokeLinecap="round" aria-hidden="true">
                <path d="M1 5.500h2.500L8 1.200v13.600L3.500 10.500H1zM10.500 5.500q1.500 2.500 0 5M13 3.500q3 4.500 0 9" /><path d="M15.500 1.500q4.500 6.500 0 13" stroke="#aaa" />
              </svg>
            </TrayIcons>
            <Clock>11:38<br />06/10/2025</Clock>
          </Tray>
        </TaskBar>
      </Desktop>
      <HostBottom><HostBottomTab /></HostBottom>
    </Page>
  );
}
